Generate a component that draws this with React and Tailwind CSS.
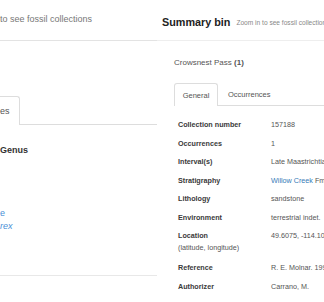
const ROWS = [
  ['Collection number', '157188'],
  ['Occurrences', '1'],
  ['Interval(s)', 'Late Maastrichtian'],
  ['Stratigraphy', null],
  ['Lithology', 'sandstone'],
  ['Environment', 'terrestrial indet.'],
];

const FONT = { fontFamily: '"Liberation Sans", Arial, sans-serif' };

function Row({ label, children }) {
  return (
    <div className="flex h-[18.5px] items-center whitespace-nowrap">
      <div className="w-[93px] shrink-0 text-[7.2px] font-bold leading-[8px] text-[#3a3a3a]">{label}</div>
      <div className="text-[7.2px] leading-[8px] text-[#555]">{children}</div>
    </div>
  );
}

export default function App() {
  return (
    <div className="flex h-[302px] w-[324px] overflow-hidden bg-white" style={FONT}>
      {/* left panel, mostly cut off */}
      <div className="flex w-[157px] shrink-0 flex-col">
        <div className="flex h-[41px] items-center border-b border-[#e3e3e3] pb-[1px] text-[9px] text-[#777] whitespace-nowrap">
          to see fossil collections
        </div>
        <div className="mt-[55px] flex h-[29px]">
          <div className="flex w-[20px] items-center rounded-tr-[3px] border-t border-r border-[#ddd] pt-[1px] text-[9px] text-[#555]">
            es
          </div>
          <div className="flex-1 border-b border-[#ddd]" />
        </div>
        <div className="mt-[20px] text-[9px] font-bold leading-[11px] text-[#333]">Genus</div>
        <div className="mt-[51px] text-[9px] leading-[13px] text-[#4a8fd6]">e</div>
        <div className="text-[9px] italic leading-[13px] text-[#4a8fd6]">rex</div>
        <div className="mt-[42px] border-b border-[#e8e8e8]" />
      </div>

      {/* summary bin */}
      <div className="flex min-w-0 flex-1 flex-col overflow-hidden">
        <div className="flex h-[41px] items-end gap-[6px] border-b border-[#eee] pb-[12px] pl-[5px] whitespace-nowrap">
          <span className="text-[10.8px] font-bold leading-[12px] text-[#222]">Summary bin</span>
          <span className="pb-[1px] text-[6.6px] leading-[8px] text-[#888]">Zoom in to see fossil collections</span>
        </div>

        <div className="pl-[17px]">
          <div className="mt-[17px] text-[8px] leading-[10px] text-[#555] whitespace-nowrap">
            Crowsnest Pass <span className="font-bold">(1)</span>
          </div>

          <div className="mt-[15px] flex h-[23px]">
            <div className="flex w-[44px] items-center justify-center rounded-t-[3px] border border-b-0 border-[#ddd] pt-[1px] text-[7.5px] text-[#555]">
              General
            </div>
            <div className="flex flex-1 items-center border-b border-[#ddd] pl-[10px] pt-[1px] text-[7.5px] text-[#555] whitespace-nowrap">
              Occurrences
            </div>
          </div>

          <div className="mt-[10px] pl-[4px]">
            {ROWS.map(([label, value]) => (
              <Row key={label} label={label}>
                {value ?? (
                  <>
                    <span className="text-[#337ab7]">Willow Creek</span> Fm.
                  </>
                )}
              </Row>
            ))}
            <div className="flex h-[32px] items-start pt-[5.25px] whitespace-nowrap">
              <div className="w-[93px] shrink-0 leading-[8px]">
                <div className="text-[7.2px] font-bold text-[#3a3a3a]">Location</div>
                <div className="mt-[4px] text-[7.2px] text-[#555]">(latitude, longitude)</div>
              </div>
              <div className="text-[7.2px] leading-[8px] text-[#555]">49.6075, -114.1006</div>
            </div>
            <Row label="Reference">R. E. Molnar. 1991</Row>
            <Row label="Authorizer">Carrano, M.</Row>
          </div>
        </div>
      </div>
    </div>
  );
}
